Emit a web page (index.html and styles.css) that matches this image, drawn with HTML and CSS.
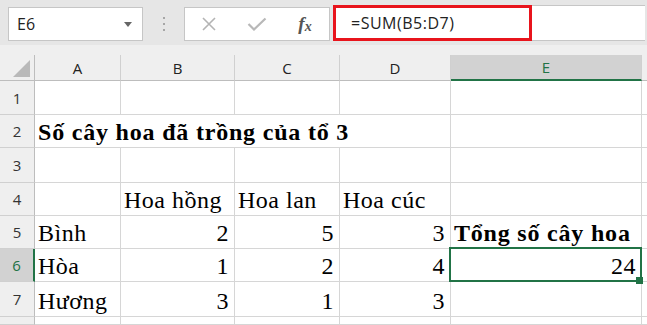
FILE: index.html
```html
<!DOCTYPE html>
<html lang="vi">
<head>
<meta charset="utf-8">
<title>Excel</title>
<link rel="stylesheet" href="styles.css">
</head>
<body>
<div class="toolbar">
  <div class="namebox"><span class="ref">E6</span><span class="caret"></span></div>
  <div class="grip"><i></i><i></i><i></i></div>
  <div class="fbtns">
    <span class="slot"><svg width="14" height="14" viewBox="0 0 14 14"><path d="M1 1L13 13M13 1L1 13" stroke="#b4b4b4" stroke-width="1.6" fill="none"/></svg></span>
    <span class="slot"><svg width="20" height="14" viewBox="0 0 20 14"><path d="M1.5 7L7 12.5L18.5 1.5" stroke="#b8b8b8" stroke-width="2.2" fill="none"/></svg></span>
    <span class="slot fx"><span class="f">f</span><span class="x">x</span></span>
  </div>
  <div class="finput"><div class="hl">=SUM(B5:D7)</div></div>
</div>
<div class="sheet">
  <div class="corner"><span class="tri"></span></div>
  <div class="h">A</div><div class="h">B</div><div class="h">C</div><div class="h">D</div><div class="h sel">E</div><div class="h"></div>

  <div class="r">1</div><div class="c"></div><div class="c"></div><div class="c"></div><div class="c"></div><div class="c"></div><div class="c"></div>

  <div class="r">2</div><div class="c b title">Số cây hoa đã trồng của tổ 3</div><div class="c"></div><div class="c"></div>

  <div class="r">3</div><div class="c"></div><div class="c"></div><div class="c"></div><div class="c"></div><div class="c"></div><div class="c"></div>

  <div class="r">4</div><div class="c"></div><div class="c">Hoa hồng</div><div class="c">Hoa lan</div><div class="c">Hoa cúc</div><div class="c"></div><div class="c"></div>

  <div class="r">5</div><div class="c">Bình</div><div class="c n">2</div><div class="c n">5</div><div class="c n">3</div><div class="c b">Tổng số cây hoa</div><div class="c"></div>

  <div class="r sel">6</div><div class="c">Hòa</div><div class="c n">1</div><div class="c n">2</div><div class="c n">4</div><div class="c n active">24<span class="selbox"></span><span class="handle"></span></div><div class="c"></div>

  <div class="r">7</div><div class="c">Hương</div><div class="c n">3</div><div class="c n">1</div><div class="c n">3</div><div class="c"></div><div class="c"></div>

  <div class="r"></div><div class="c"></div><div class="c"></div><div class="c"></div><div class="c"></div><div class="c"></div><div class="c"></div>
</div>
</body>
</html>
```
FILE: styles.css
```css
html, body {
  margin: 0;
  padding: 0;
}
body {
  width: 647px;
  height: 325px;
  overflow: hidden;
  background: #efefef;
  font-family: "Segoe UI", "Open Sans", "Noto Sans", sans-serif;
}
.toolbar {
  height: 45px;
  background: #e6e6e6;
  display: flex;
  align-items: flex-start;
}
.namebox {
  margin: 7px 0 0 8px;
  width: 135px;
  height: 34px;
  box-sizing: border-box;
  background: #fff;
  border: 1px solid #c6c6c6;
  display: flex;
  align-items: center;
  padding-left: 8px;
}
.ref {
  flex: 1;
  font-size: 16px;
  color: #222;
}
.caret {
  width: 0;
  height: 0;
  border-left: 4px solid transparent;
  border-right: 4px solid transparent;
  border-top: 5px solid #666;
  margin-right: 10px;
}
.grip {
  width: 41px;
  height: 34px;
  margin-top: 7px;
  display: flex;
  flex-direction: column;
  align-items: center;
  justify-content: center;
  gap: 4px;
}
.grip i {
  width: 2px;
  height: 2px;
  background: #a6a6a6;
}
.fbtns {
  width: 146px;
  height: 34px;
  margin-top: 7px;
  box-sizing: border-box;
  background: #fff;
  border: 1px solid #c6c6c6;
  display: flex;
  align-items: center;
}
.slot {
  width: 48px;
  height: 32px;
  display: flex;
  align-items: center;
  justify-content: center;
}
.fx {
  font-family: "Liberation Serif", serif;
  font-style: italic;
  font-weight: bold;
  color: #555;
}
.fx .f {
  font-size: 19px;
}
.fx .x {
  font-size: 14px;
  margin-top: 5px;
}
.finput {
  flex: 1;
  margin: 5px 2px 0 3px;
  height: 36px;
  box-sizing: border-box;
  background: #fff;
  border-top: 1px solid #c6c6c6;
  border-bottom: 1px solid #c6c6c6;
  display: flex;
}
.hl {
  width: 199px;
  height: 36px;
  margin-top: -1px;
  box-sizing: border-box;
  border: 3px solid #e8141c;
  padding: 4px 0 0 15px;
  font-size: 16px;
  line-height: 22px;
  letter-spacing: 0.5px;
  color: #222;
}
.sheet {
  margin-top: 10px;
  display: grid;
  grid-template-columns: 35px 86px 114px 105px 111px 191px 1fr;
  grid-template-rows: 26px 34px 33px 35px 33px 33px 33px 35px 8px;
}
.corner, .h, .r {
  background: #efefef;
  box-sizing: border-box;
  border-right: 1px solid #d0d0d0;
  border-bottom: 1px solid #d0d0d0;
  display: flex;
  align-items: center;
  justify-content: center;
  font-size: 15px;
  color: #222;
}
.r {
  color: #333;
  border-right-color: #bdbdbd;
}
.h {
  border-bottom-color: #bdbdbd;
}
.corner {
  border-right-color: #bdbdbd;
  border-bottom-color: #bdbdbd;
  position: relative;
}
.tri {
  position: absolute;
  right: 4px;
  bottom: 3px;
  width: 0;
  height: 0;
  border-left: 17px solid transparent;
  border-bottom: 17px solid #b9b9b9;
}
.h.sel {
  background: #d2d2d2;
  color: #217346;
  border-bottom: 2px solid #217346;
}
.r.sel {
  background: #d2d2d2;
  color: #217346;
  border-right: 2px solid #217346;
}
.c {
  background: #fff;
  box-sizing: border-box;
  border-right: 1px solid #d6d6d6;
  border-bottom: 1px solid #d6d6d6;
  display: flex;
  align-items: flex-end;
  padding: 0 5px 2px 3px;
  font-family: "Liberation Serif", "Times New Roman", serif;
  font-size: 24px;
  line-height: 26px;
  letter-spacing: 0.5px;
  color: #000;
  white-space: nowrap;
}
.c.n {
  justify-content: flex-end;
}
.c.b {
  font-weight: bold;
  letter-spacing: 0.8px;
}
.title {
  grid-column: span 4;
}
.active {
  position: relative;
}
.selbox {
  position: absolute;
  left: -2px;
  top: -2px;
  right: -1px;
  bottom: -1px;
  border: 2px solid #217346;
  z-index: 1;
}
.handle {
  position: absolute;
  right: -2px;
  bottom: -3px;
  width: 7px;
  height: 7px;
  background: #217346;
  z-index: 2;
}
```
